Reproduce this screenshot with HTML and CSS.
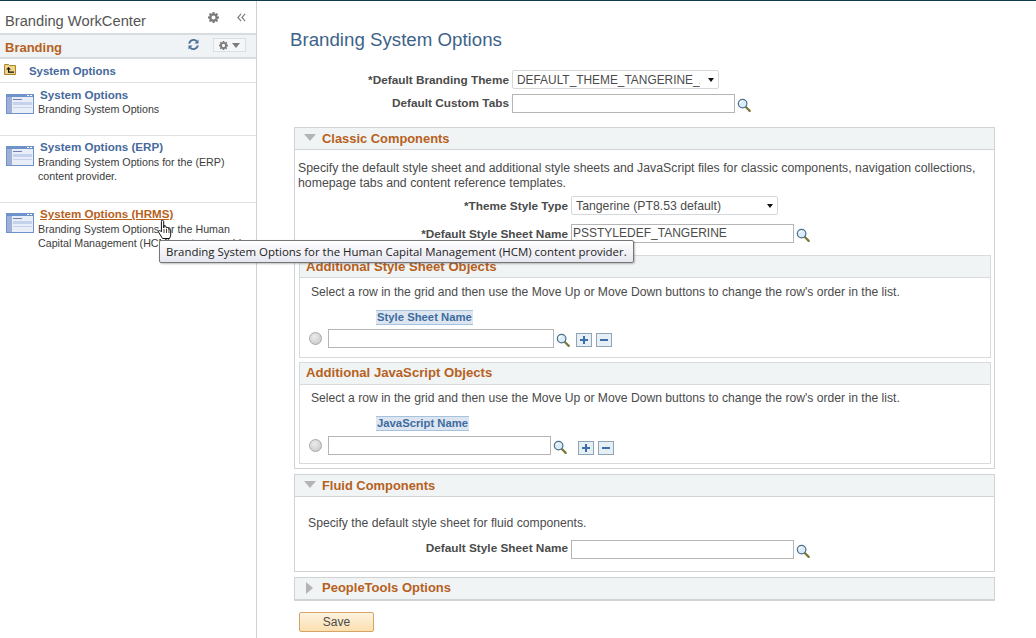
FILE: index.html
```html
<!DOCTYPE html>
<html lang="en">
<head>
<meta charset="utf-8">
<title>Branding System Options</title>
<link rel="stylesheet" href="styles.css">
</head>
<body>
<svg class="defs" width="0" height="0" aria-hidden="true">
  <defs>
    <symbol id="glass" viewBox="0 0 15 15">
      <path d="M9.2 9.4 L13.6 13.8" stroke="#7d7a3a" stroke-width="2.4" stroke-linecap="round"/>
      <circle cx="6" cy="6" r="4.6" fill="#d9ecf7" stroke="#4d6f8a" stroke-width="1.3"/>
      <path d="M3.4 5.6 A3 3 0 0 1 6 3.2" fill="none" stroke="#fff" stroke-width="1.2"/>
    </symbol>
    <symbol id="gear" viewBox="0 0 12 12">
      <path fill-rule="evenodd" d="M5 0h2l.3 1.6 1 .4L9.700 1.100l1.300 1.300-.9 1.400.4 1L12 5v2l-1.500.3-.4 1 .9 1.400-1.300 1.300-1.400-.9-1 .4L7 12H5l-.3-1.500-1-.4-1.400.9L1 9.700l.9-1.400-.4-1L0 7V5l1.500-.3.4-1L1 2.400 2.300 1.100l1.400.9 1-.4zM6 3.800a2.200 2.200 0 1 0 0 4.400 2.200 2.200 0 0 0 0-4.400z"/>
    </symbol>
    <symbol id="win" viewBox="0 0 28 20">
      <rect width="28" height="20" fill="#6e93cb"/>
      <rect x="1" y="3" width="26" height="16" fill="#e8edf8"/>
      <rect x="1" y="3" width="5" height="16" fill="#9fb0d6"/>
      <rect x="7" y="5" width="9" height="1" fill="#6e7fb0"/>
      <rect x="7" y="8" width="19" height="3" fill="#c5d2ec"/>
      <rect x="7" y="13" width="19" height="1" fill="#c5d2ec"/>
      <rect x="21" y="1" width="2" height="1" fill="#fff"/>
      <rect x="24" y="1" width="2" height="1" fill="#fff"/>
    </symbol>
  </defs>
</svg>
<div class="page">
  <aside class="side">
    <div class="side-top">
      <span class="side-title">Branding WorkCenter</span>
      <svg class="top-gear"><use href="#gear"/></svg>
      <svg class="top-collapse" viewBox="0 0 10 9"><path d="M4.500 .5 1 4.500 4.500 8.500M9 .5 5.500 4.500 9 8.500" fill="none" stroke="#7d7d7d" stroke-width="1.300"/></svg>
    </div>
    <div class="side-band">
      <span class="band-title">Branding</span>
      <svg class="band-refresh" viewBox="0 0 12 12"><path d="M1.300 5A4.800 4.800 0 0 1 9.600 2.600M10.700 7A4.800 4.800 0 0 1 2.400 9.400" fill="none" stroke="#4f7197" stroke-width="2"/><path d="M11.500 .5V5H7zM.5 11.500V7H5z" fill="#4f7197"/></svg>
      <span class="band-menu"><svg class="band-gear"><use href="#gear"/></svg><i class="band-caret"></i></span>
    </div>
    <div class="side-up">
      <svg class="folder" viewBox="0 0 12 11"><path d="M.5 1.500V.5h4l1 1h6v9H.5z" fill="#f0d488" stroke="#a8852a"/><path d="M4.500 3 7 5.500H5.200V7.500H10V8.800H4V5.500H2z" fill="#111"/></svg>
      <a class="up-link">System Options</a>
    </div>
    <div class="side-item item-a">
      <svg class="win"><use href="#win"/></svg>
      <div class="item-text"><a class="item-link">System Options</a><p class="item-desc">Branding System Options</p></div>
    </div>
    <div class="side-item item-b">
      <svg class="win"><use href="#win"/></svg>
      <div class="item-text"><a class="item-link">System Options (ERP)</a><p class="item-desc">Branding System Options for the (ERP) content provider.</p></div>
    </div>
    <div class="side-item item-c">
      <svg class="win"><use href="#win"/></svg>
      <div class="item-text"><a class="item-link hot">System Options (HRMS)</a><p class="item-desc">Branding System Options for the Human Capital Management (HCM) content provider.</p></div>
    </div>
  </aside>

  <main class="main">
    <h1 class="title">Branding System Options</h1>
    <div class="row row-top">
      <label class="lab lab-top">*Default Branding Theme</label>
      <div class="sel sel-theme"><span class="sel-val">DEFAULT_THEME_TANGERINE_A</span><i class="caret"></i></div>
    </div>
    <div class="row row-tabs">
      <label class="lab lab-top">Default Custom Tabs</label>
      <div class="inp inp-tabs"></div>
      <svg class="glass"><use href="#glass"/></svg>
    </div>

    <section class="sec sec-classic">
      <h2 class="sec-head"><i class="tri-down"></i>Classic Components</h2>
      <div class="sec-body">
        <p class="intro">Specify the default style sheet and additional style sheets and JavaScript files for classic components, navigation collections, homepage tabs and content reference templates.</p>
        <div class="row row-style">
          <label class="lab lab-cl">*Theme Style Type</label>
          <div class="sel sel-style"><span class="sel-val">Tangerine (PT8.53 default)</span><i class="caret"></i></div>
        </div>
        <div class="row row-sheet">
          <label class="lab lab-cl">*Default Style Sheet Name</label>
          <div class="inp inp-sheet">PSSTYLEDEF_TANGERINE</div>
          <svg class="glass"><use href="#glass"/></svg>
        </div>
        <div class="sub sub-css">
          <h3 class="sub-head">Additional Style Sheet Objects</h3>
          <p class="hint">Select a row in the grid and then use the Move Up or Move Down buttons to change the row's order in the list.</p>
          <div class="col-wrap"><span class="col-head">Style Sheet Name</span></div>
          <div class="grid-row">
            <i class="radio"></i>
            <div class="inp inp-css"></div>
            <svg class="glass"><use href="#glass"/></svg>
            <span class="btns"><i class="pm plus"></i><i class="pm minus"></i></span>
          </div>
        </div>
        <div class="sub sub-js">
          <h3 class="sub-head">Additional JavaScript Objects</h3>
          <p class="hint">Select a row in the grid and then use the Move Up or Move Down buttons to change the row's order in the list.</p>
          <div class="col-wrap"><span class="col-head">JavaScript Name</span></div>
          <div class="grid-row">
            <i class="radio"></i>
            <div class="inp inp-js"></div>
            <svg class="glass"><use href="#glass"/></svg>
            <span class="btns"><i class="pm plus"></i><i class="pm minus"></i></span>
          </div>
        </div>
      </div>
    </section>

    <section class="sec sec-fluid">
      <h2 class="sec-head"><i class="tri-down"></i>Fluid Components</h2>
      <div class="sec-body fluid-body">
        <p class="intro">Specify the default style sheet for fluid components.</p>
        <div class="row row-fluid">
          <label class="lab lab-cl">Default Style Sheet Name</label>
          <div class="inp inp-sheet"></div>
          <svg class="glass"><use href="#glass"/></svg>
        </div>
      </div>
    </section>

    <section class="sec sec-pt">
      <h2 class="sec-head"><i class="tri-right"></i>PeopleTools Options</h2>
    </section>

    <button class="save" type="button">Save</button>
  </main>
</div>

<div class="tip">Branding System Options for the Human Capital Management (HCM) content provider.</div>
<svg class="hand" viewBox="0 0 16 22"><path d="M4.500 1.500c1-.8 2.200 0 2.200 1V9l.2-1.500c.8-.8 2-.6 2.300.4l.1 1c.7-.7 1.900-.5 2.200.5l.1 1c.8-.5 1.900-.2 2.100.8v4.500c0 1.500-.6 2.500-1.200 3.800H5.500L1.800 13.500c-.8-1.300.4-2.400 1.600-1.700l1 1V2.500z" fill="#fff" stroke="#111" stroke-width="1"/><path d="M7 10v4M9.500 10v4M12 11v3" stroke="#111" stroke-width=".8"/></svg>
</body>
</html>
```

FILE: styles.css
```css
* { box-sizing: border-box; }
html, body { margin: 0; padding: 0; }
body {
  width: 1036px;
  height: 638px;
  overflow: hidden;
  position: relative;
  background: #fff;
  font-family: "Liberation Sans", Arial, sans-serif;
  font-size: 12px;
  color: #4b4b4b;
  border-top: 1px solid #0d3c4e;
}
.defs { position: absolute; }
.page { display: flex; height: 637px; }

/* sidebar */
.side { width: 257px; flex: none; border-right: 1px solid #d0d3d6; }
.side-top { display: flex; align-items: center; height: 34px; padding-left: 5px; border-bottom: 2px solid #d8dcdf; }
.side-title { font-size: 14.700px; color: #555; flex: 1; position: relative; top: 4px; }
.top-gear { width: 11px; height: 11px; fill: #7c7c7c; margin-right: 18px; margin-top: 1px; }
.top-collapse { width: 9px; height: 9px; margin-right: 10px; margin-top: 1px; }
.side-band { display: flex; align-items: center; height: 24px; padding-left: 5px; background: #eff3f5; border-bottom: 2px solid #d8dcdf; }
.band-title { font-size: 13px; font-weight: bold; color: #b7611d; flex: 1; position: relative; top: 1px; }
.band-refresh { width: 11px; height: 11px; margin-right: 14px; margin-bottom: 3px; }
.band-menu { display: flex; align-items: center; justify-content: center; gap: 4px; width: 33px; height: 14px; margin-right: 10px; margin-bottom: 2px; background: #f4f6f7; border: 1px solid #dcdfe1; }
.band-gear { width: 9px; height: 9px; fill: #7c7c7c; }
.band-caret { width: 0; height: 0; border: 4px solid transparent; border-top: 5px solid #7c7c7c; border-bottom: 0; }
.side-up { display: flex; align-items: center; height: 24px; border-bottom: 1px solid #dfe1e3; padding-left: 4px; }
.folder { width: 12px; height: 11px; margin-bottom: 3px; }
.up-link { font-size: 11.400px; font-weight: bold; color: #47699b; margin-left: 13px; }
.side-item { display: flex; padding: 5px 0 0 6px; }
.item-a { height: 53px; border-bottom: 1px solid #e0e2e4; }
.item-a .win { margin-top: 6px; }
.item-b { height: 67px; border-bottom: 1px solid #e0e2e4; }
.win { width: 28px; height: 20px; flex: none; margin-top: 5px; }
.item-text { margin-left: 4px; }
.item-link { display: block; font-size: 11.600px; font-weight: bold; color: #47699b; margin-left: 2px; line-height: 14px; }
.item-b .item-link, .item-c .item-link { margin-top: -1px; margin-bottom: 1px; }
.item-link.hot { color: #b7611d; text-decoration: underline; }
.item-desc { margin: 0; font-size: 10.700px; line-height: 14px; color: #3c3c3c; width: 218px; }

/* main */
.main { flex: 1; padding-left: 33px; }
.title { margin: 0; padding-top: 28px; font-size: 18.700px; line-height: 21px; font-weight: normal; color: #3d6389; }
.row { display: flex; align-items: center; height: 19px; }
.row-top { margin-top: 20px; }
.row-tabs { margin-top: 5px; }
.lab { font-size: 11.800px; font-weight: bold; color: #4b4b4b; text-align: right; flex: none; margin-right: 3px; }
.row-tabs .lab { margin-bottom: 2px; }
.row-fluid .lab { margin-bottom: 3px; }
.lab-top { width: 219px; }
.lab-cl { width: 273px; }
.sel { display: flex; align-items: center; height: 19px; background: #fff; border: 1px solid #d4d8dc; border-radius: 2px; color: #4b4b4b; position: relative; width: 207px; }
.sel-val { white-space: nowrap; overflow: hidden; }
.sel-theme { padding-left: 4px; font-size: 11.900px; }
.sel-theme .sel-val { width: 183px; }
.sel-style { padding-left: 4px; font-size: 12.250px; }
.caret { position: absolute; right: 4px; top: 7px; width: 0; height: 0; border: 3.500px solid transparent; border-top: 4px solid #111; border-bottom: 0; }
.inp { height: 19px; border: 1px solid #b5b5b5; background: #fff; padding-left: 1px; line-height: 17px; color: #4b4b4b; white-space: nowrap; }
.inp-tabs, .inp-sheet, .inp-js { width: 223px; }
.inp-css { width: 226px; }
.glass { width: 14px; height: 14px; margin-left: 2px; margin-top: 3px; flex: none; }

/* sections */
.sec { width: 701px; margin-left: 4px; border: 1px solid #d0d3d6; }
.sec-head { display: flex; align-items: center; height: 22px; margin: 0; padding-left: 9px; background: #f0f4f5; border-bottom: 1px solid #cfd3d6; font-size: 12.900px; font-weight: bold; color: #b7611d; }
.tri-down { width: 0; height: 0; margin-right: 5px; margin-bottom: 3px; border: 6.500px solid transparent; border-top: 7px solid #b4b4b4; border-bottom: 0; }
.tri-right { width: 0; height: 0; margin-left: 2px; margin-right: 9px; border: 6.500px solid transparent; border-left: 7px solid #b4b4b4; border-right: 0; }
.sec-classic { margin-top: 14px; height: 342px; }
.sec-classic > .sec-head .tri-down, .sec-fluid > .sec-head .tri-down { margin-right: 6px; }
.intro { margin: 0; padding: 11px 3px 0; line-height: 15px; font-size: 12.300px; color: #4b4b4b; }
.row-style { margin-top: 5px; }
.row-sheet { margin-top: 9px; }
.sub { width: 692px; margin: 0 0 4px 4px; border: 1px solid #d8dbde; }
.sub-css { height: 103px; margin-top: 12px; }
.sub-js { height: 102px; }
.sub-head { height: 22px; margin: 0; padding: 0 0 0 6px; background: #f0f4f5; border-bottom: 1px solid #d8dbde; font-size: 13.150px; line-height: 21px; font-weight: bold; color: #b7611d; }
.sub-js .sub-head { line-height: 19px; }
.hint { margin: 0; padding: 7px 0 0 11px; line-height: 14px; font-size: 12.150px; }
.col-wrap { padding-left: 76px; margin-top: 11px; height: 15px; }
.col-head { display: inline-block; height: 15px; line-height: 13px; padding: 0 1px; font-size: 11.300px; font-weight: bold; color: #3d6ba0; background: #dde6f0; border-top: 1px solid #a5c3df; border-bottom: 1px solid #a5c3df; }
.grid-row { display: flex; align-items: center; margin-top: 4px; padding-left: 9px; }
.sub-js .hint { padding-top: 6px; }
.sub-js .grid-row { margin-top: 5px; }
.radio { width: 13px; height: 13px; border-radius: 50%; border: 1px solid #a8a8a8; background: radial-gradient(circle at 40% 35%, #ececec, #c4c4c4); margin-right: 6px; flex: none; }
.btns { display: flex; gap: 4px; margin-left: 6px; margin-top: 3px; }
.sub-js .btns { margin-left: 11px; margin-top: 5px; }
.pm { display: block; width: 16px; height: 14px; border: 1px solid #8ea4b5; background: #e6eff5; position: relative; }
.pm::before { content: ""; position: absolute; left: 3px; right: 3px; top: 5px; height: 2px; background: #3d6fa8; }
.plus::after { content: ""; position: absolute; top: 2px; bottom: 2px; left: 6px; width: 2px; background: #3d6fa8; }
.sec-fluid { margin-top: 5px; height: 98px; }
.fluid-body .intro { padding: 19px 13px 0; font-size: 12.200px; }
.row-fluid { margin-top: 9px; }
.sec-pt { margin-top: 5px; height: 24px; border-bottom-width: 2px; }
.sec-pt .sec-head { border-bottom: 0; height: 21px; padding-bottom: 2px; font-size: 13px; }
.save { display: block; width: 75px; height: 20px; margin: 11px 0 0 9px; padding: 0; font: 12px "Liberation Sans", Arial, sans-serif; color: #4b4b4b; background: linear-gradient(#fdf3e0, #fbdfb0); border: 1px solid #d6a566; border-radius: 2px; }

/* overlays */
.tip { position: absolute; left: 159px; top: 239px; width: 475px; height: 23px; padding-left: 6px; line-height: 21px; font-family: "Open Sans", "Liberation Sans", sans-serif; font-size: 11.450px; color: #222; white-space: nowrap; background: linear-gradient(#fff, #e6e6f0); border: 1px solid #767676; border-radius: 2px; box-shadow: 1px 1px 2px rgba(0,0,0,.25); }
.hand { position: absolute; left: 157px; top: 218px; width: 16px; height: 22px; }
```
